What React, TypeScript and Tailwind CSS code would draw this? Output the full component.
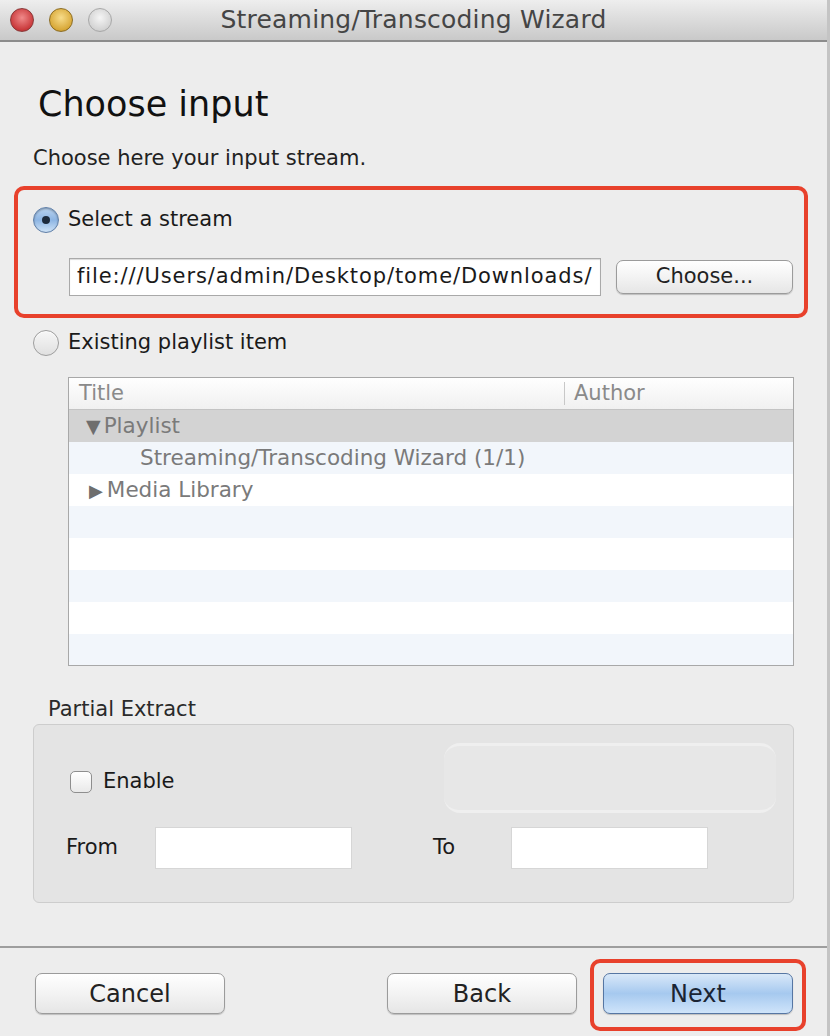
import React from "react";

const font = { fontFamily: '"DejaVu Sans", "Liberation Sans", sans-serif' };

const Radio: React.FC<{ checked?: boolean }> = ({ checked }) =>
  checked ? (
    <div className="w-[26px] h-[26px] rounded-full border border-[#5f7fa8] bg-gradient-to-b from-[#b9d3ef] via-[#8db5e3] to-[#cfe3f7] flex items-center justify-center shadow-[inset_0_1px_2px_rgba(0,0,0,0.3)]">
      <div className="w-[8px] h-[8px] rounded-full bg-[#1d2b3d]" />
    </div>
  ) : (
    <div className="w-[26px] h-[26px] rounded-full border border-[#9d9d9d] bg-gradient-to-b from-[#f7f7f7] to-[#e0e0e0] shadow-[inset_0_1px_1px_rgba(255,255,255,0.8)]" />
  );

const MacButton: React.FC<{ label: string; primary?: boolean; size?: string }> = ({ label, primary, size }) => (
  <div
    className={
      "rounded-[7px] border flex items-center justify-center shadow-[0_1px_1px_rgba(0,0,0,0.2)] " +
      (size || "h-[41px] w-[190px] text-[24px]") +
      " " +
      (primary
        ? "border-[#5676a3] bg-gradient-to-b from-[#d9e8f8] via-[#a6c9ef] to-[#cfe4fa] text-[#1a2433]"
        : "border-[#9b9b9b] bg-gradient-to-b from-[#ffffff] via-[#f3f3f3] to-[#e6e6e6] text-[#222]")
    }
  >
    {label}
  </div>
);

const rows = [
  { text: "Playlist", arrow: "down", indent: 86 },
  { text: "Streaming/Transcoding Wizard (1/1)", indent: 140 },
  { text: "Media Library", arrow: "right", indent: 89 },
  { text: "" },
  { text: "" },
  { text: "" },
  { text: "" },
  { text: "" },
];

const App: React.FC = () => {
  return (
    <div style={font} className="w-[830px] h-[1036px] bg-[#ededed] flex flex-col overflow-hidden border-r-[3px] border-[#c4c4c4]">
      {/* title bar */}
      <div className="h-[42px] shrink-0 relative flex items-center justify-center bg-gradient-to-b from-[#eeeeee] to-[#c9c9c9] border-b-2 border-[#8c8c8c]">
        <div className="absolute left-[10px] top-[8px] flex gap-[15px]">
          <div className="w-[24px] h-[24px] rounded-full border border-[#8a3a3a] bg-[radial-gradient(circle_at_50%_40%,#f08a8a,#c9393b_70%,#8c2a2a)]" />
          <div className="w-[24px] h-[24px] rounded-full border border-[#8c6d24] bg-[radial-gradient(circle_at_50%_40%,#f7dc8a,#d8a838_70%,#9a7420)]" />
          <div className="w-[24px] h-[24px] rounded-full border border-[#a8a8a8] bg-[radial-gradient(circle_at_50%_40%,#f5f5f5,#d3d3d3_70%,#b3b3b3)]" />
        </div>
        <span className="text-[25px] text-[#454545] tracking-[0.2px]">Streaming/Transcoding Wizard</span>
      </div>

      {/* heading */}
      <div className="ml-[38px] mt-[41px] h-[42px] leading-[42px] text-[35px] text-[#111]">Choose input</div>
      <div className="ml-[33px] mt-[20px] h-[26px] leading-[26px] text-[21px] text-[#222]">Choose here your input stream.</div>

      {/* highlighted stream selection */}
      <div className="ml-[14px] mt-[15px] w-[794px] h-[132px] border-4 border-[#e8412c] rounded-[10px] flex flex-col">
        <div className="ml-[15px] mt-[16px] flex items-center gap-[9px] h-[28px]">
          <Radio checked />
          <span className="text-[21px] text-[#1a1a1a]">Select a stream</span>
        </div>
        <div className="ml-[51px] mt-[24px] flex items-center">
          <div className="w-[532px] h-[38px] bg-white border border-[#a9a9a9] shadow-[inset_0_1px_1px_rgba(0,0,0,0.15)] flex items-center pl-[7px] text-[21px] text-[#1a1a1a] whitespace-nowrap overflow-hidden tracking-[0.9px]">
            file:///Users/admin/Desktop/tome/Downloads/
          </div>
          <div className="ml-[15px]">
            <MacButton label="Choose..." size="w-[177px] h-[34px] text-[21px]" />
          </div>
        </div>
      </div>

      {/* existing playlist */}
      <div className="ml-[33px] mt-[11px] flex items-center gap-[9px] h-[28px]">
        <Radio />
        <span className="text-[21px] text-[#1a1a1a]">Existing playlist item</span>
      </div>

      <div className="ml-[68px] mt-[20px] w-[726px] h-[289px] bg-white border border-[#a8a8a8] flex flex-col overflow-hidden">
        <div className="h-[32px] shrink-0 flex border-b border-[#c3c3c3] bg-gradient-to-b from-[#ffffff] to-[#f0f0f0] text-[21px] text-[#8a8a8a]">
          <div className="w-[496px] pl-[10px] flex items-center border-r border-[#c8c8c8] my-[4px]">Title</div>
          <div className="pl-[9px] flex items-center">Author</div>
        </div>
        {rows.map((r, i) => (
          <div
            key={i}
            className={
              "h-[32px] shrink-0 flex items-center text-[21.5px] text-[#7a7a7a] " +
              (i === 0 ? "bg-[#d3d3d3]" : i % 2 === 1 ? "bg-[#f2f6fb]" : "bg-white")
            }
          >
            {r.text && (
              <div className="flex items-center" style={{ paddingLeft: (r.indent || 88) - 69 }}>
                {r.arrow === "down" && <span className="text-[19px] text-[#6e6e6e] mr-[3px]">▼</span>}
                {r.arrow === "right" && <span className="text-[18px] text-[#6e6e6e] mr-[4px]">▶</span>}
                <span>{r.text}</span>
              </div>
            )}
          </div>
        ))}
      </div>

      {/* partial extract */}
      <div className="ml-[48px] mt-[31px] h-[24px] leading-[24px] text-[21px] text-[#2a2a2a]">Partial Extract</div>
      <div className="ml-[33px] mt-[3px] w-[761px] h-[179px] rounded-[6px] border border-[#cdcdcd] bg-[#e4e4e4] relative flex flex-col">
        <div className="absolute left-[410px] top-[18px] w-[332px] h-[70px] rounded-[16px] bg-[#e7e7e7] border-t-[3px] border-b-[3px] border-[#efefef]" />
        <div className="ml-[36px] mt-[41px] flex items-center gap-[11px] relative">
          <div className="w-[22px] h-[22px] rounded-[5px] border border-[#8e8e8e] bg-gradient-to-b from-[#ffffff] to-[#e9e9e9]" />
          <span className="text-[21px] text-[#1a1a1a]">Enable</span>
        </div>
        <div className="mt-[29px] flex items-center relative">
          <span className="ml-[32px] w-[89px] text-[21px] text-[#1a1a1a]">From</span>
          <div className="w-[197px] h-[42px] bg-white border border-[#d6d6d6]" />
          <span className="ml-[81px] w-[78px] text-[21px] text-[#1a1a1a]">To</span>
          <div className="w-[197px] h-[42px] bg-white border border-[#d6d6d6]" />
        </div>
      </div>

      {/* footer */}
      <div className="mt-[43px] border-t-2 border-[#9e9e9e] flex-1">
        <div className="mt-[25px] ml-[35px] flex items-start">
          <MacButton label="Cancel" />
          <div className="ml-[162px]">
            <MacButton label="Back" />
          </div>
          <div className="ml-[26px] relative">
            <MacButton label="Next" primary />
            <div className="absolute -left-[13px] -top-[14px] w-[216px] h-[72px] border-4 border-[#e8412c] rounded-[10px]" />
          </div>
        </div>
      </div>
    </div>
  );
};

export default App;
